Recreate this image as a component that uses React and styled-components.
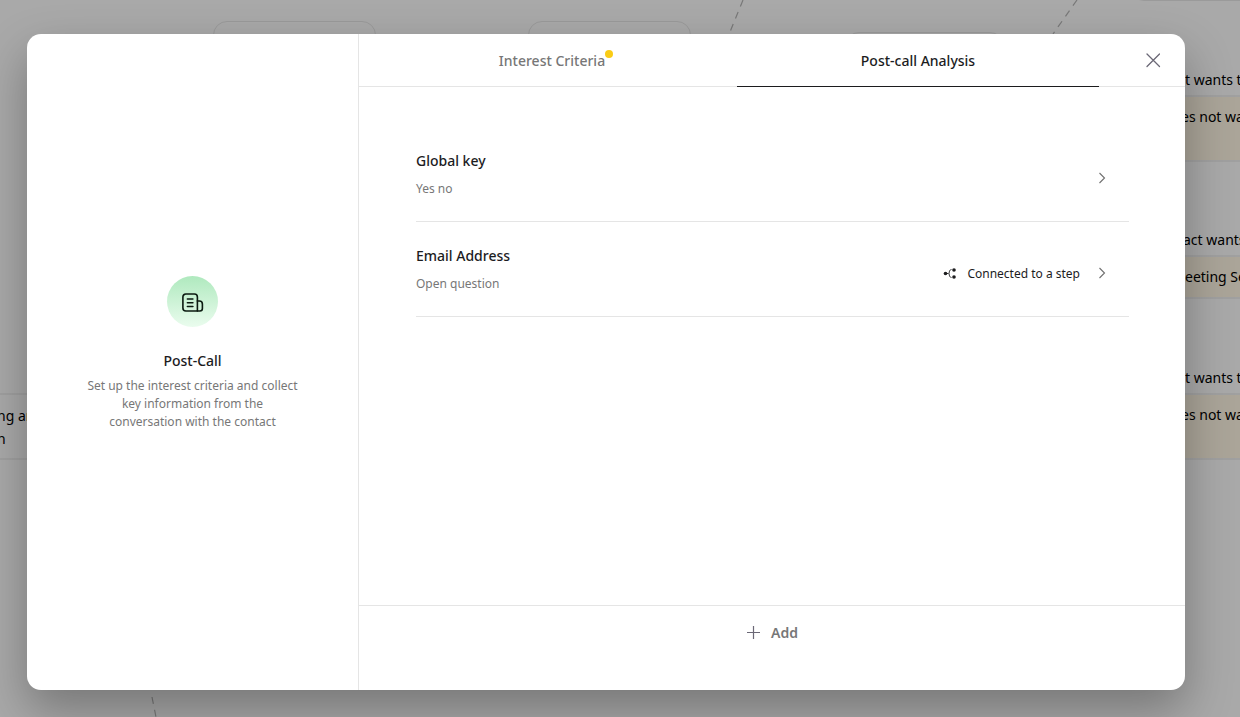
import React from 'react';
import styled, { createGlobalStyle, css } from 'styled-components';

const GlobalStyle = createGlobalStyle`
  * { box-sizing: border-box; }
  body {
    margin: 0;
    background: #fcfcfc;
    color: #1c1c1e;
    font-family: 'Noto Sans', 'Open Sans', sans-serif;
    font-size: 14px;
  }
  button { font: inherit; color: inherit; background: none; border: 0; padding: 0; cursor: pointer; }
  h2, h3, p, ul { margin: 0; padding: 0; }
`;

const Page = styled.div`
  position: relative;
  min-height: 100vh;
  overflow: hidden;
`;

const Canvas = styled.div`
  position: absolute;
  inset: 0;
  overflow: hidden;
`;

const Edges = styled.svg`
  position: absolute;
  inset: 0;
  width: 100%;
  height: 100%;
`;

const Node = styled.div`
  position: absolute;
  left: ${(p) => p.$x}px;
  top: ${(p) => p.$y}px;
  width: ${(p) => p.$w}px;
  height: ${(p) => p.$h}px;
  border: 1px solid #e6e6e6;
  border-radius: 14px;
`;

const Option = styled.div`
  height: ${(p) => p.$h}px;
  padding: 9px 0 0 ${(p) => p.$indent}px;
  border-bottom: 2px solid #efefef;
  line-height: 22px;
  color: #000;
  white-space: nowrap;
  ${(p) => p.$tinted && css`background: #fff6e4;`}
`;

const StepCard = styled.div`
  position: absolute;
  left: 1111px;
  top: ${(p) => p.$y}px;
  width: 240px;
`;

const Prompt = styled.div`
  position: absolute;
  left: -3px;
  top: 393px;
  width: 160px;
  padding: 9px 0 8px;
  border-top: 2px solid #efefef;
  border-bottom: 2px solid #efefef;
  color: #000;
  line-height: 23px;
  white-space: pre-line;
`;

const Overlay = styled.div`
  position: relative;
  display: flex;
  min-height: 100vh;
  padding: 34px 55px 27px 27px;
  background: rgba(0, 0, 0, 0.33);
`;

const Dialog = styled.section`
  flex: 1;
  display: flex;
  border-radius: 14px;
  overflow: hidden;
  background: #fff;
  box-shadow: 0 20px 48px rgba(0, 0, 0, 0.3);
`;

const Sidebar = styled.aside`
  flex: 0 0 332px;
  display: flex;
  flex-direction: column;
  align-items: center;
  justify-content: center;
  padding: 0 48px 17px;
  border-right: 1px solid #e5e5e5;
  text-align: center;
`;

const Badge = styled.div`
  display: grid;
  place-items: center;
  width: 51px;
  height: 51px;
  margin-bottom: 23px;
  border-radius: 50%;
  background: linear-gradient(#afe9be, #eafcee);
`;

const SideTitle = styled.h2`
  margin-bottom: 5px;
  font-size: 14px;
  font-weight: 500;
  line-height: 22px;
`;

const SideText = styled.p`
  max-width: 214px;
  font-size: 12px;
  line-height: 18px;
  color: #777;
`;

const Main = styled.div`
  flex: 1;
  display: flex;
  flex-direction: column;
  min-width: 0;
`;

const Header = styled.header`
  display: flex;
  height: 53px;
  padding-left: 16px;
  border-bottom: 1px solid #e5e5e5;
`;

const Tabs = styled.div`
  flex: 1;
  display: flex;
`;

const Tab = styled.button`
  flex: 1;
  display: flex;
  justify-content: center;
  align-items: center;
  height: 53px;
  font-size: 14px;
  font-weight: 500;
  color: #777;
  border-bottom: 1px solid transparent;
  ${(p) => p.$active && css`
    color: #1c1c1e;
    border-bottom-color: #1c1c1e;
  `}
`;

const Dot = styled.span`
  width: 8px;
  height: 8px;
  margin-bottom: 12px;
  border-radius: 50%;
  background: #facc15;
`;

const CloseButton = styled.button`
  display: grid;
  place-items: center;
  width: 64px;
  margin-left: 22px;
  color: #6b6876;
`;

const List = styled.ul`
  flex: 1;
  padding: 40px 56px 0 57px;
  list-style: none;
`;

const Row = styled.li`
  border-bottom: 1px solid #e5e5e5;
`;

const RowButton = styled.button`
  display: flex;
  align-items: center;
  width: 100%;
  height: 94px;
  padding: 8px 23px 0 0;
  text-align: left;
`;

const RowText = styled.span`
  flex: 1;
  display: flex;
  flex-direction: column;
  gap: 7px;
  padding-bottom: 7px;
`;

const RowTitle = styled.span`
  font-size: 14px;
  font-weight: 500;
  line-height: 22px;
`;

const RowType = styled.span`
  font-size: 12px;
  line-height: 20px;
  color: #777;
`;

const Connected = styled.span`
  display: flex;
  align-items: center;
  gap: 10px;
  margin-right: 18px;
  font-size: 12px;
`;

const Footer = styled.footer`
  display: flex;
  justify-content: center;
  align-items: flex-start;
  height: 85px;
  padding-top: 15px;
  border-top: 1px solid #e5e5e5;
`;

const AddButton = styled.button`
  display: flex;
  align-items: center;
  gap: 11px;
  height: 22px;
  font-size: 14px;
  font-weight: 600;
  color: #777;
`;

const NewsIcon = () => (
  <svg width="24" height="24" viewBox="0.6 -0.5 24 24" fill="none" stroke="#0b1a10" strokeWidth="1.6" strokeLinecap="round" strokeLinejoin="round">
    <path d="M17 20.500H5.500a3 3 0 0 1-3-3v-11a3 3 0 0 1 3-3h8.500a3 3 0 0 1 3 3v14Z" />
    <path d="M17 10.500h2a3 3 0 0 1 3 3v4.500a2.500 2.500 0 0 1-2.500 2.500H17" />
    <path d="M7 8.500h5.500M7 12.200h5.500M7 16h5.500" />
  </svg>
);

const BranchIcon = () => (
  <svg width="14" height="14" viewBox="0 0 14 14" fill="none" stroke="#1c1c1e">
    <circle cx="2.500" cy="7.500" r="1.800" fill="#1c1c1e" stroke="none" />
    <circle cx="11" cy="4" r="1.800" fill="#1c1c1e" stroke="none" />
    <circle cx="11" cy="11" r="1.800" fill="#1c1c1e" stroke="none" />
    <path d="M2.500 7.500h3M8.500 3.500c-2 .3-2 1.500-2.500 4 .5 2.500.5 3.700 2.500 4" strokeWidth="0.900" />
  </svg>
);

const ChevronIcon = () => (
  <svg width="8" height="12" viewBox="0 0 8 12" fill="none" stroke="#707070" strokeWidth="1.100">
    <path d="M1.500 1 6.500 6l-5 5" />
  </svg>
);

const CloseIcon = () => (
  <svg width="16" height="16" viewBox="0 0 16 16" fill="none" stroke="currentColor" strokeWidth="1.300" strokeLinecap="round">
    <path d="m2 2 12.500 12.500M14.500 2 2 14.500" />
  </svg>
);

const PlusIcon = () => (
  <svg width="14" height="14" viewBox="0 0 14 14" fill="none" stroke="#6b6876" strokeWidth="1.200">
    <path d="M7.500 1v13M1 7.500h13" />
  </svg>
);

const nodes = [
  { x: 213, y: 21, w: 163, h: 60 },
  { x: 528, y: 21, w: 163, h: 60 },
  { x: 845, y: 32, w: 159, h: 60 },
  { x: 1130, y: -59, w: 160, h: 60 },
];

const steps = [
  { y: 60, options: [['t wants to', 37, 74], ['es not want', 65, 70]] },
  { y: 220, options: [['act wants to', 37, 72], ['eeting Set', 42, 74]] },
  { y: 358, options: [['t wants to', 37, 74], ['es not want', 65, 70]] },
];

const rows = [
  { title: 'Global key', type: 'Yes no', connected: false },
  { title: 'Email Address', type: 'Open question', connected: true },
];

export default function App() {
  return (
    <>
      <GlobalStyle />
      <Page>
        <Canvas aria-hidden="true">
          <Edges fill="none" stroke="#b4b4b4" strokeWidth="1.200" strokeDasharray="7 6">
            <path d="M743 0 730 32" />
            <path d="M1077 0 1053 34" />
            <path d="M152 697 157 722" />
          </Edges>
          {nodes.map((n) => (
            <Node key={n.x} $x={n.x} $y={n.y} $w={n.w} $h={n.h} />
          ))}
          {steps.map((s) => (
            <StepCard key={s.y} $y={s.y}>
              {s.options.map(([label, h, indent], j) => (
                <Option key={label} $h={h} $indent={indent} $tinted={j === 1}>{label}</Option>
              ))}
            </StepCard>
          ))}
          <Prompt>{'ng and\nn'}</Prompt>
        </Canvas>

        <Overlay>
          <Dialog role="dialog" aria-label="Post-Call">
            <Sidebar>
              <Badge><NewsIcon /></Badge>
              <SideTitle>Post-Call</SideTitle>
              <SideText>
                Set up the interest criteria and collect key information from the conversation with the contact
              </SideText>
            </Sidebar>
            <Main>
              <Header>
                <Tabs role="tablist">
                  <Tab role="tab" aria-selected="false">Interest Criteria<Dot /></Tab>
                  <Tab role="tab" aria-selected="true" $active>Post-call Analysis</Tab>
                </Tabs>
                <CloseButton aria-label="Close"><CloseIcon /></CloseButton>
              </Header>
              <List>
                {rows.map((r) => (
                  <Row key={r.title}>
                    <RowButton>
                      <RowText>
                        <RowTitle>{r.title}</RowTitle>
                        <RowType>{r.type}</RowType>
                      </RowText>
                      {r.connected && <Connected><BranchIcon />Connected to a step</Connected>}
                      <ChevronIcon />
                    </RowButton>
                  </Row>
                ))}
              </List>
              <Footer>
                <AddButton><PlusIcon />Add</AddButton>
              </Footer>
            </Main>
          </Dialog>
        </Overlay>
      </Page>
    </>
  );
}
